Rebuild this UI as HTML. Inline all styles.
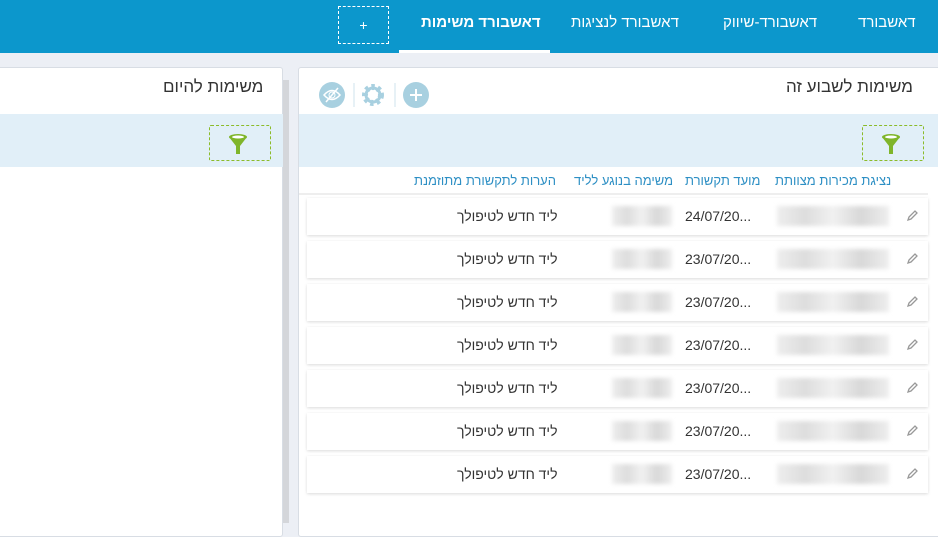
<!DOCTYPE html><html><head><meta charset="utf-8"><style>
*{margin:0;padding:0;box-sizing:border-box}
body{width:938px;height:523px;overflow:hidden;background:#eceff5;font-family:"Liberation Sans","Noto Sans CJK SC",sans-serif;position:relative;direction:ltr}
.a{position:absolute}
.nav{left:0;top:0;width:938px;height:53px;background:#0c97cc}
.nt{color:#fff;font-size:15px;top:14px;white-space:nowrap}
.panel{background:#fff;border:1px solid #d8dde4;border-radius:3px}
.band{background:#e1eff8}
.filt{width:62px;height:36px;border:1px dashed #8bbb2a;border-radius:2px}
.hd{color:#2d8fc4;font-size:13px;top:173px;white-space:nowrap}
.row{left:307px;width:621px;height:37px;background:#fff;box-shadow:0 1px 3px rgba(0,0,0,.15)}
.blur{background:linear-gradient(90deg,#eee,#ddd,#f1f1f1,#d8d8d8,#eee);filter:blur(2px)}
.t{font-size:14px;color:#333;white-space:nowrap}
</style></head><body>
<div class="a nav"></div>
<div class="a nt" style="left:858px">דאשבורד</div>
<div class="a nt" style="left:723px">דאשבורד-שיווק</div>
<div class="a nt" style="left:571px">דאשבורד לנציגות</div>
<div class="a nt" style="left:421px;font-weight:bold">דאשבורד משימות</div>
<div class="a" style="left:399px;top:50px;width:151px;height:3px;background:#fff"></div>
<div class="a" style="left:338px;top:6px;width:51px;height:38px;border:1px dashed #fff;color:#fff;text-align:center;line-height:36px;font-size:14px">+</div>

<div class="a panel" style="left:-5px;top:67px;width:288px;height:470px"></div>
<div class="a" style="left:283px;top:80px;width:6px;height:443px;background:#d4d6da"></div>
<div class="a t" style="left:163px;top:77px;font-size:17px">משימות להיום</div>
<div class="a band" style="left:0;top:114px;width:283px;height:53px"></div>
<div class="a filt" style="left:209px;top:125px"></div>

<div class="a panel" style="left:298px;top:67px;width:645px;height:470px"></div>
<div class="a t" style="left:786px;top:77px;font-size:17px">משימות לשבוע זה</div>
<svg class="a" style="left:318px;top:81px" width="114" height="28">
<circle cx="14" cy="14" r="13" fill="#a8d0e0"/><path d="M6 14q8-9 16 0q-8 9-16 0z" stroke="#fff" stroke-width="1.5" fill="none"/><circle cx="14" cy="14" r="3" stroke="#fff" fill="none"/><line x1="8" y1="21" x2="20" y2="7" stroke="#fff" stroke-width="1.5"/>
<line x1="36" y1="2" x2="36" y2="26" stroke="#cfe3ec"/>
<circle cx="55" cy="14" r="8" fill="none" stroke="#a8d0e0" stroke-width="6" stroke-dasharray="3 3"/><circle cx="55" cy="14" r="7" fill="none" stroke="#a8d0e0" stroke-width="3"/>
<line x1="77" y1="2" x2="77" y2="26" stroke="#cfe3ec"/>
<circle cx="98" cy="14" r="13" fill="#a8d0e0"/><path d="M98 8v12M92 14h12" stroke="#fff" stroke-width="2"/>
</svg>
<div class="a band" style="left:299px;top:114px;width:639px;height:53px"></div>
<div class="a filt" style="left:862px;top:125px"></div>
<svg class="a" style="left:880px;top:133px" width="22" height="22"><ellipse cx="11" cy="4" rx="9" ry="3" fill="#7fb52a"/><path d="M2 4l7 9v8h4v-8l7-9z" fill="#7fb52a"/><ellipse cx="11" cy="4" rx="6" ry="1.5" fill="#fff"/></svg>
<svg class="a" style="left:227px;top:133px" width="22" height="22"><ellipse cx="11" cy="4" rx="9" ry="3" fill="#7fb52a"/><path d="M2 4l7 9v8h4v-8l7-9z" fill="#7fb52a"/><ellipse cx="11" cy="4" rx="6" ry="1.5" fill="#fff"/></svg>

<div class="a hd" style="left:775px">נציגת מכירות מצוותת</div>
<div class="a hd" style="left:685px">מועד תקשורת</div>
<div class="a hd" style="left:574px">משימה בנוגע לליד</div>
<div class="a hd" style="left:414px">הערות לתקשורת מתוזמנת</div>
<div class="a" style="left:299px;top:193px;width:629px;height:2px;background:#eee"></div>

<div id="rows"></div>
<script>
var h='';var d=['24/07/20...','23/07/20...','23/07/20...','23/07/20...','23/07/20...','23/07/20...','23/07/20...'];
for(var i=0;i<7;i++){var y=198+43*i;
h+='<div class="a row" style="top:'+y+'px"></div>';
h+='<div class="a blur" style="left:777px;top:'+(y+8)+'px;width:112px;height:20px"></div>';
h+='<div class="a blur" style="left:612px;top:'+(y+8)+'px;width:60px;height:20px"></div>';
h+='<div class="a t" style="left:685px;top:'+(y+10)+'px">'+d[i]+'</div>';
h+='<div class="a t" style="left:457px;top:'+(y+10)+'px">ליד חדש לטיפולך</div>';
h+='<svg class="a" style="left:906px;top:'+(y+12)+'px" width="12" height="12"><path d="M2 10l1-3 6-6 2 2-6 6z" fill="none" stroke="#999" stroke-width="1.3"/></svg>';}
document.getElementById('rows').innerHTML=h;
</script>
</body></html>
